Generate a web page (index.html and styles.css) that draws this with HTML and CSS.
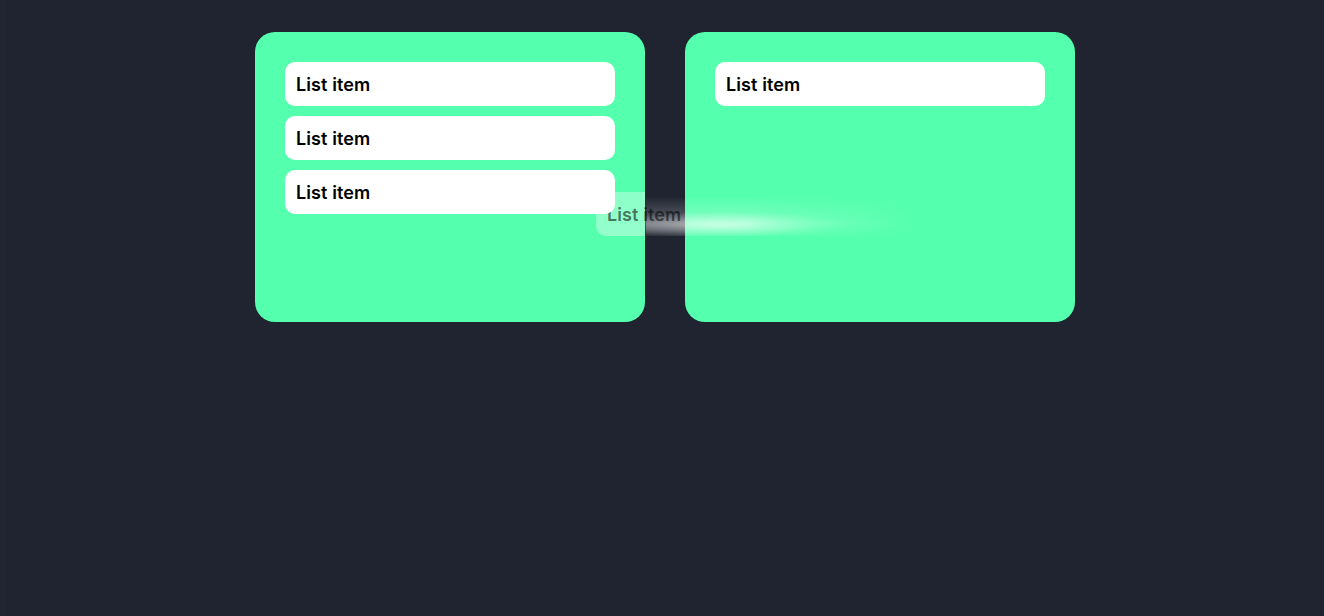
FILE: index.html
```html
<!DOCTYPE html>
<html>
<head>
<meta charset="utf-8">
<link rel="stylesheet" href="styles.css">
</head>
<body>
<div class="app">
  <div class="edge"></div>
  <main class="board">
    <section class="panel">
      <div class="item">List item</div>
      <div class="item">List item</div>
      <div class="item">List item</div>
      <div class="ghost"><span class="ghost-label">List item</span></div>
    </section>
    <section class="panel">
      <div class="item">List item</div>
    </section>
  </main>
</div>
</body>
</html>
```
FILE: styles.css
```css
* { box-sizing: border-box; }
html, body { margin: 0; height: 100%; }
body {
  background: #1f2430;
  font-family: Inter, "Noto Sans", sans-serif;
  overflow: hidden;
}
.app { display: flex; height: 100%; }
.edge { width: 6px; background: #232630; flex: none; }
.board {
  flex: 1;
  display: flex;
  justify-content: center;
  align-items: flex-start;
  gap: 40px;
  padding-top: 32px;
}
.panel {
  position: relative;
  width: 390px;
  height: 290px;
  background: #54ffad;
  border-radius: 20px;
  padding: 30px;
  display: flex;
  flex-direction: column;
  gap: 10px;
}
.item {
  position: relative;
  z-index: 2;
  height: 44px;
  background: #ffffff;
  border-radius: 10px;
  padding: 0 11px;
  display: flex;
  align-items: center;
  font-size: 18px;
  font-weight: 600;
  color: #000;
  letter-spacing: 0.1px;
}
.ghost {
  position: absolute;
  z-index: 1;
  left: 341px;
  top: 160px;
  width: 330px;
  height: 44px;
  border-radius: 10px;
  padding: 0 11px;
  display: flex;
  align-items: center;
  font-size: 18px;
  font-weight: 600;
  color: rgba(0, 0, 0, 0.55);
  letter-spacing: 0.1px;
  background: linear-gradient(rgba(255,255,255,0.33), rgba(255,255,255,0.38)) 0 0 / 49px 100% no-repeat;
}
.ghost::before {
  content: "";
  position: absolute;
  inset: 0;
  border-radius: 10px;
  background:
    radial-gradient(ellipse 40% 28% at 38% 74%, rgba(255,255,255,0.55), rgba(255,255,255,0) 100%),
    linear-gradient(to bottom, rgba(255,255,255,0) 10%, rgba(255,255,255,0.3) 72%, rgba(255,255,255,0.08) 100%);
  -webkit-mask-image: linear-gradient(to right, #000 0%, #000 45%, transparent 98%);
  mask-image: linear-gradient(to right, transparent 0, transparent 49px, #000 50px, #000 45%, transparent 98%);
}
.ghost-label { position: relative; }
```
